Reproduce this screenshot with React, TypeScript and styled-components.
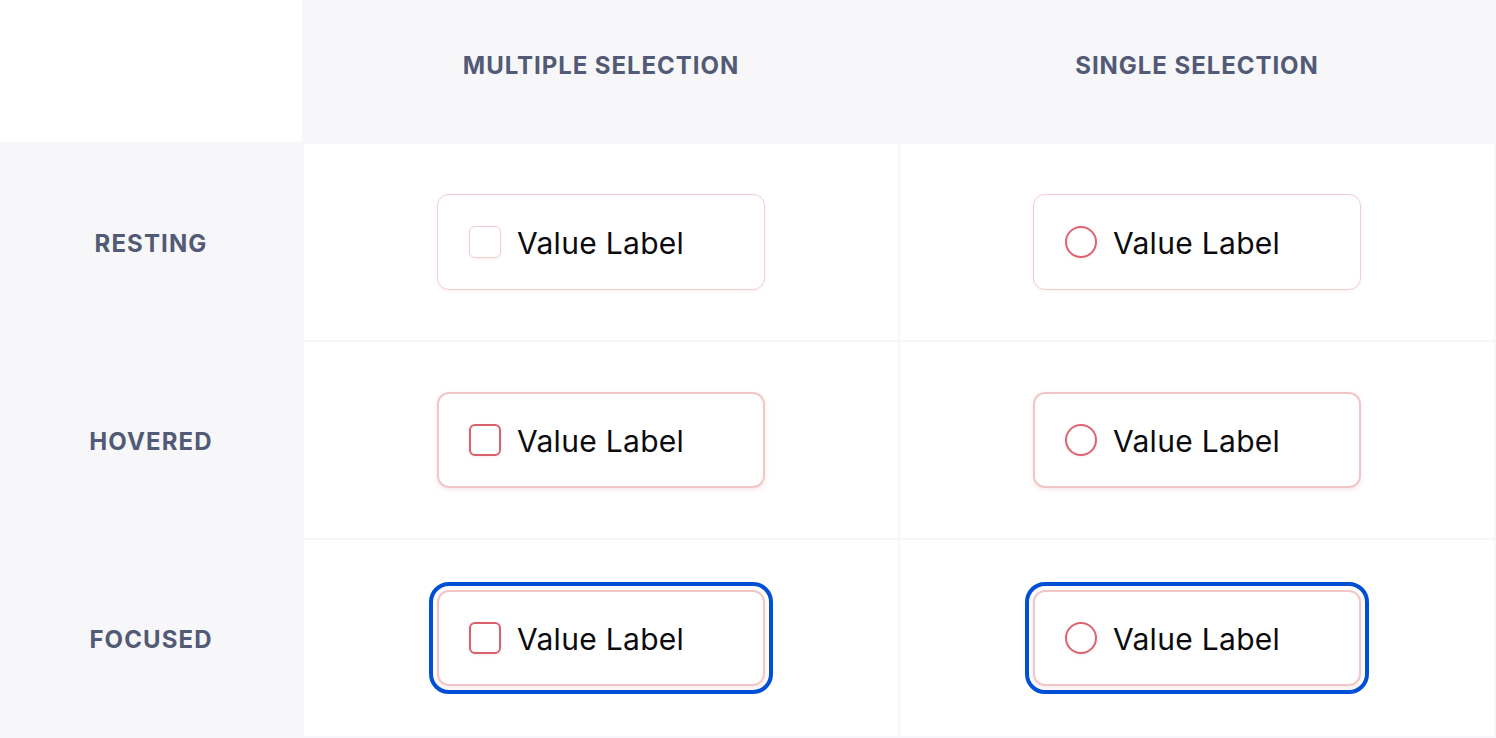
import React from "react";
import styled, { createGlobalStyle, css } from "styled-components";

const Global = createGlobalStyle`
  html, body { margin: 0; padding: 0; background: #ffffff; }
  body { font-family: Inter, "Noto Sans", sans-serif; -webkit-font-smoothing: antialiased; }
`;

const Grid = styled.div`
  display: grid;
  grid-template-columns: 302px 594px 594px;
  grid-template-rows: 142px 196px 196px 196px;
  gap: 2px;
  padding: 0 2px 2px 0;
  width: 1496px;
  height: 738px;
  box-sizing: border-box;
  background: #f7f7f9;
`;

const Corner = styled.div`
  background: #ffffff;
`;

const HeadCell = styled.div`
  display: flex;
  align-items: center;
  justify-content: center;
  padding-bottom: 12px;
  font-size: 24px;
  font-weight: 700;
  letter-spacing: 0.95px;
  color: #525a76;
  text-transform: uppercase;
`;

const RowLabel = styled.div`
  display: flex;
  align-items: center;
  justify-content: center;
  padding-top: 2px;
  font-size: 24px;
  font-weight: 700;
  letter-spacing: 1.1px;
  color: #525a76;
  text-transform: uppercase;
`;

const Cell = styled.div`
  display: flex;
  align-items: center;
  justify-content: center;
  background: #ffffff;
`;

type State = "resting" | "hovered" | "focused";

const Option = styled.div<{ $state: State }>`
  display: flex;
  align-items: center;
  gap: 16px;
  box-sizing: border-box;
  width: 328px;
  height: 96px;
  padding: 0 0 0 31px;
  border-radius: 12px;
  background: #ffffff;
  border: 1px solid #f5cdd0;
  box-shadow: 0 1px 3px rgba(220, 140, 150, 0.12);
  ${(p) =>
    p.$state !== "resting" &&
    css`
      border: 2px solid #f1c6c9;
      padding-left: 30px;
      box-shadow: 0 2px 5px rgba(220, 130, 140, 0.18);
    `}
  ${(p) =>
    p.$state === "focused" &&
    css`
      outline: 4px solid #0050d6;
      outline-offset: 4px;
    `}
`;

const Box = styled.span<{ $state: State; $round?: boolean }>`
  flex: none;
  box-sizing: border-box;
  width: 32px;
  height: 32px;
  border-radius: ${(p) => (p.$round ? "50%" : "6px")};
  border: ${(p) =>
    p.$round
      ? "2px solid #dc6470"
      : p.$state === "resting"
      ? "1px solid #f5cdd0"
      : "2px solid #d9606c"};
  background: #ffffff;
  box-shadow: 0 1px 3px rgba(210, 120, 130, 0.15);
`;

const Label = styled.span`
  font-size: 30px;
  font-weight: 400;
  letter-spacing: 0.3px;
  color: #0b0b0f;
  line-height: 1;
  padding-top: 2px;
`;

const states: { key: State; label: string }[] = [
  { key: "resting", label: "Resting" },
  { key: "hovered", label: "Hovered" },
  { key: "focused", label: "Focused" },
];

export default function App() {
  return (
    <>
      <Global />
      <Grid>
        <Corner />
        <HeadCell>Multiple Selection</HeadCell>
        <HeadCell>Single Selection</HeadCell>
        {states.map((s) => (
          <React.Fragment key={s.key}>
            <RowLabel>{s.label}</RowLabel>
            <Cell>
              <Option $state={s.key}>
                <Box $state={s.key} />
                <Label>Value Label</Label>
              </Option>
            </Cell>
            <Cell>
              <Option $state={s.key}>
                <Box $state={s.key} $round />
                <Label>Value Label</Label>
              </Option>
            </Cell>
          </React.Fragment>
        ))}
      </Grid>
    </>
  );
}
